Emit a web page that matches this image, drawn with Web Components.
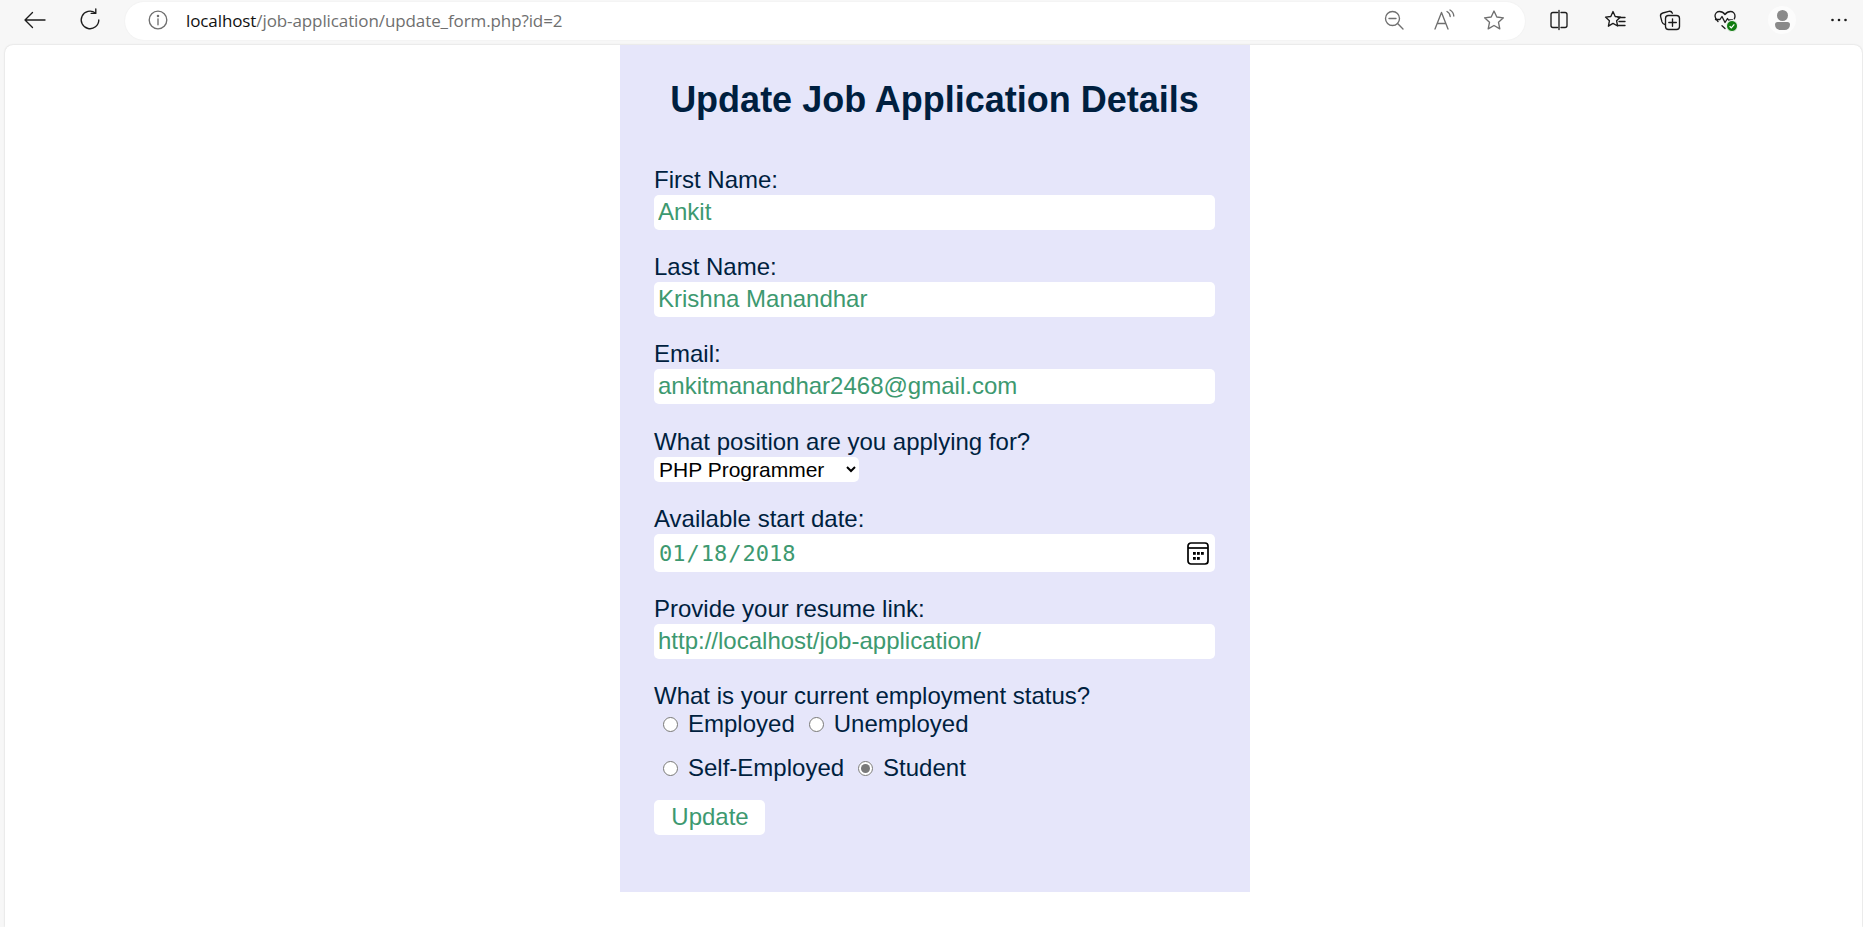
<!DOCTYPE html>
<html lang="en">
<head>
<meta charset="utf-8">
<title>Update Job Application Details</title>
<style>
  html, body { margin: 0; height: 100%; }
  body { background: #f7f7f7; overflow: hidden; }
</style>
</head>
<body>
<browser-window>
  <job-form>
    <form-field label="First Name:"><input type="text" value="Ankit"></form-field>
    <form-field label="Last Name:"><input type="text" value="Krishna Manandhar"></form-field>
    <form-field label="Email:"><input type="email" value="ankitmanandhar2468@gmail.com"></form-field>
    <form-field class="position" label="What position are you applying for?">
      <select><option>PHP Programmer</option><option>Java Developer</option></select>
    </form-field>
    <form-field label="Available start date:"><date-box value="2018-01-18"></date-box></form-field>
    <form-field label="Provide your resume link:"><input type="url" value="http://localhost/job-application/"></form-field>
    <form-field label="What is your current employment status?">
      <radio-row>
        <radio-option label="Employed"></radio-option>
        <radio-option label="Unemployed"></radio-option>
      </radio-row>
      <radio-row class="second">
        <radio-option label="Self-Employed"></radio-option>
        <radio-option label="Student" checked></radio-option>
      </radio-row>
    </form-field>
  </job-form>
</browser-window>

<script>
const ICONS = {
  back: '<path d="M3 12H23M10.5 4.5L3 12l7.5 7.5"/>',
  refresh: '<path d="M20.8 12a8.8 8.8 0 1 1-3.4-7"/><path d="M17.8 .8v4.6h-4.6"/>',
  info: '<circle cx="12" cy="12" r="8.8"/><path d="M12 10.8v6"/><circle cx="12" cy="7.9" r=".6" fill="currentColor"/>',
  zoomOut: '<circle cx="10.5" cy="10.5" r="7"/><path d="M15.6 15.6L21 21M7 10.5h7"/>',
  read: '<path d="M3 21L9.5 4.5 16 21M5.3 15.5h8.4"/><path d="M15 3.5c1.8 1 3 2.8 3.2 5M18 2c2.2 1.2 3.6 3.4 3.8 6"/>',
  star: '<path d="M12 3l2.8 6 6.6.8-4.9 4.5 1.3 6.5L12 17.5l-5.8 3.3 1.3-6.5-4.9-4.5 6.6-.8z"/>',
  split: '<path d="M10.5 4.5H6a2 2 0 0 0-2 2v11a2 2 0 0 0 2 2h4.5M14 4.5h4a2 2 0 0 1 2 2v11a2 2 0 0 1-2 2h-4M12 2.5v19" />',
  favorites: '<path d="M10 3.5l2.2 5 5.3.6-3.9 3.7 1 5.2-4.6-2.6-4.6 2.8 1-5.4-3.9-3.7 5.3-.6z"/><path d="M15 9.5h7M16 13.5h6M15 17.5h7"/>',
  collections: '<path d="M7 16.5c-1.5-.2-2.5-1-3-2.6L2.6 8.6C2.2 6.8 3 5.5 4.8 5l6-1.6c1.7-.4 2.9.2 3.6 1.8"/><rect x="7.5" y="7.5" width="14" height="14" rx="3"/><path d="M14.5 10.8v7.5M10.8 14.5h7.5"/>',
  health: '<path d="M12 20.5l-3-2.7M5 13.5C2.5 11 2 9.8 2 8c0-2.8 2.2-4.5 4.5-4.5 2.3 0 4 1 5.5 3 1.5-2 3.2-3 5.5-3C19.8 3.5 22 5.2 22 8c0 1-.2 1.9-.7 2.8"/><path d="M2.5 11.5H7l2-3 3 6 2.5-4 1 1.5h4"/>'
}

function icon(name, size = 24) {
  return `<svg width="${size}" height="${size}" viewBox="0 0 24 24" fill="none" stroke="currentColor" stroke-width="1.35" stroke-linecap="round" stroke-linejoin="round">${ICONS[name]}</svg>`
}

class BrowserWindow extends HTMLElement {
  constructor() {
    super();
    this.attachShadow({ mode: 'open' })
  }

  connectedCallback() {
    this.shadowRoot.innerHTML = `
    <style>
    :host {
      display: flex;
      flex-direction: column;
      height: 100vh;
      background: #f7f7f7;
    }
    .toolbar {
      display: flex;
      align-items: flex-start;
      height: 45px;
      flex: none;
      padding-left: 22px;
      color: #1c1c1c;
      box-sizing: border-box;
    }
    .tool {
      display: flex;
      width: 24px;
      height: 24px;
      margin-top: 8px;
      flex: none;
    }
    .refresh { margin-left: 32px; }
    .pill {
      display: flex;
      align-items: flex-start;
      width: 1400px;
      height: 38px;
      margin: 2px 0 0 23px;
      padding: 0 19px 0 21px;
      box-sizing: border-box;
      background: #fff;
      border-radius: 19px;
      color: #6f6f6f;
      box-shadow: 0 0 2px rgba(0, 0, 0, .06);
    }
    .pill .tool { margin-top: 6px; }
    .url {
      margin: 0 0 0 16px;
      font: 17px/37px "Open Sans", sans-serif;
      color: #6f6f6f;
      white-space: nowrap;
      letter-spacing: -.1px;
    }
    .url b { font-weight: 400; color: #111; }
    .end { margin-left: auto; display: flex; gap: 26px; }
    .split { margin-left: 22px; }
    .fav { margin-left: 32px; }
    .coll, .health { margin-left: 31px; }
    .health { position: relative; }
    .health i {
      position: absolute;
      right: -1px;
      bottom: 0;
      width: 10px;
      height: 10px;
      border-radius: 50%;
      background: #107c10;
      border: 1px solid #f7f7f7;
    }
    .health i svg { display: block; }
    .avatar {
      display: flex;
      flex-direction: column;
      align-items: center;
      width: 28px;
      height: 28px;
      margin: 6px 0 0 31px;
      flex: none;
      border-radius: 50%;
      background: #fcfcfc;
    }
    .avatar span { display: block; background: #8a8a8a; }
    .avatar .head { width: 11px; height: 11px; border-radius: 50%; margin-top: 4px; }
    .avatar .body { width: 15px; height: 8px; border-radius: 3px 3px 6px 6px; margin-top: 1px; }
    .more { margin-left: 31px; }
    .content {
      flex: 1;
      margin: 0 1px 0 5px;
      background: #fff;
      border-radius: 8px 8px 0 0;
      box-shadow: 0 0 2px rgba(0, 0, 0, .18);
      display: flex;
      justify-content: center;
      min-height: 0;
      padding-left: 3px;
    }
    </style>
    <div class="toolbar">
      <span class="tool">${icon('back')}</span>
      <span class="tool refresh">${icon('refresh')}</span>
      <div class="pill">
        <span class="tool">${icon('info')}</span>
        <p class="url"><b>localhost</b>/job-application/update_form.php?id=2</p>
        <div class="end">
          <span class="tool">${icon('zoomOut')}</span>
          <span class="tool">${icon('read')}</span>
          <span class="tool">${icon('star')}</span>
        </div>
      </div>
      <span class="tool split">${icon('split')}</span>
      <span class="tool fav">${icon('favorites')}</span>
      <span class="tool coll">${icon('collections')}</span>
      <span class="tool health">${icon('health')}<i><svg width="10" height="10" viewBox="0 0 10 10" fill="none" stroke="#fff" stroke-width="1.2"><path d="M2.6 5.2l1.7 1.6 3-3.4"/></svg></i></span>
      <div class="avatar"><span class="head"></span><span class="body"></span></div>
      <span class="tool more"><svg width="24" height="24" viewBox="0 0 24 24" fill="#1c1c1c"><circle cx="5.5" cy="12" r="1.3"/><circle cx="12" cy="12" r="1.3"/><circle cx="18.5" cy="12" r="1.3"/></svg></span>
    </div>
    <div class="content"><slot></slot></div>
    `
  }
}

class JobForm extends HTMLElement {
  constructor() {
    super();
    this.attachShadow({ mode: 'open' })
  }

  connectedCallback() {
    this.shadowRoot.innerHTML = `
    <style>
    :host {
      display: block;
      width: 630px;
      height: 847px;
      box-sizing: border-box;
      padding: 0 35px 0 34px;
      background: #e6e6fa;
      color: #001f3f;
      font-family: "Liberation Sans", Arial, sans-serif;
    }
    h1 {
      margin: 0;
      padding-top: 34px;
      height: 86px;
      box-sizing: border-box;
      text-align: center;
      font-size: 36px;
      line-height: 41px;
      font-weight: 700;
    }
    form {
      display: flex;
      flex-direction: column;
      gap: 24px;
      padding-top: 36px;
    }
    .submit {
      align-self: flex-start;
      width: 111px;
      height: 35px;
      margin-top: -4px;
      padding: 0 0 1px 1px;
      border: 0;
      border-radius: 5px;
      background: #fff;
      color: #3d9970;
      font: 24px "Liberation Sans", Arial, sans-serif;
    }
    </style>
    <h1>Update Job Application Details</h1>
    <form onsubmit="return false">
      <slot></slot>
      <button class="submit" type="submit">Update</button>
    </form>
    `
  }
}

class FormField extends HTMLElement {
  constructor() {
    super();
    this.attachShadow({ mode: 'open' })
  }

  connectedCallback() {
    const label = this.getAttribute('label') ?? ''
    this.shadowRoot.innerHTML = `
    <style>
    :host {
      display: block;
    }
    :host(.position) { margin-top: 1px; }
    label {
      display: block;
      height: 28px;
      font-size: 24px;
      line-height: 25px;
    }
    ::slotted(input) {
      display: block;
      width: 100%;
      height: 35px;
      box-sizing: border-box;
      margin: 0;
      padding: 0 4px 2px;
      border: 0;
      border-radius: 5px;
      background: #fff;
      color: #3d9970;
      font: 24px "Liberation Sans", Arial, sans-serif;
      outline: none;
    }
    ::slotted(select) {
      display: block;
      height: 25px;
      width: 205px;
      margin: 0;
      padding: 0 0 0 1px;
      border: 0;
      border-radius: 5px;
      background: #fff;
      color: #000;
      font: 21px "Liberation Sans", Arial, sans-serif;
    }
    </style>
    <label>${label}</label>
    <slot></slot>
    `
  }
}

class DateBox extends HTMLElement {
  constructor() {
    super();
    this.attachShadow({ mode: 'open' })
  }

  connectedCallback() {
    this.shadowRoot.innerHTML = `
    <style>
    :host {
      display: flex;
      align-items: center;
      height: 38px;
      padding-right: 6px;
      background: #fff;
      border-radius: 5px;
    }
    input {
      flex: 1;
      min-width: 0;
      height: 100%;
      border: 0;
      padding: 0 4px;
      background: transparent;
      color: #3d9970;
      font: 22px "DejaVu Sans Mono", monospace;
      outline: none;
    }
    input::-webkit-calendar-picker-indicator { display: none; }
    svg { flex: none; }
    </style>
    <input type="date" value="${this.getAttribute('value') ?? ''}">
    <svg width="22" height="23" viewBox="0 0 22 23" fill="none" stroke="#000" stroke-width="1.7">
      <rect x="1" y="1" width="20" height="21" rx="3"/>
      <path d="M1 6h20"/>
      <g fill="#000" stroke="none">
        <rect x="6" y="10" width="2.8" height="2.8"/><rect x="10" y="10" width="2.8" height="2.8"/><rect x="14" y="10" width="2.8" height="2.8"/>
        <rect x="6" y="15" width="2.8" height="2.8"/><rect x="10" y="15" width="2.8" height="2.8"/>
      </g>
    </svg>
    `
  }
}

class RadioRow extends HTMLElement {
  constructor() {
    super();
    this.attachShadow({ mode: 'open' })
  }

  connectedCallback() {
    this.shadowRoot.innerHTML = `
    <style>
    :host {
      display: flex;
      gap: 14px;
      padding-left: 9px;
      margin-top: 0;
      margin-bottom: 1px;
    }
    :host(.second) { margin-top: 19px; margin-bottom: 0; }
    </style>
    <slot></slot>
    `
  }
}

class RadioOption extends HTMLElement {
  constructor() {
    super();
    this.attachShadow({ mode: 'open' })
  }

  connectedCallback() {
    const checked = this.hasAttribute('checked') ? 'checked' : ''
    this.shadowRoot.innerHTML = `
    <style>
    :host {
      display: block;
      font-size: 24px;
      line-height: 25px;
    }
    label { display: flex; align-items: center; gap: 10px; }
    input {
      width: 15px;
      height: 15px;
      margin: 1px 0 0;
      accent-color: #7a7a7a;
    }
    </style>
    <label><input type="radio" name="status" ${checked}><span>${this.getAttribute('label') ?? ''}</span></label>
    `
  }
}

customElements.define('browser-window', BrowserWindow)
customElements.define('job-form', JobForm)
customElements.define('form-field', FormField)
customElements.define('date-box', DateBox)
customElements.define('radio-row', RadioRow)
customElements.define('radio-option', RadioOption)
</script>
</body>
</html>
